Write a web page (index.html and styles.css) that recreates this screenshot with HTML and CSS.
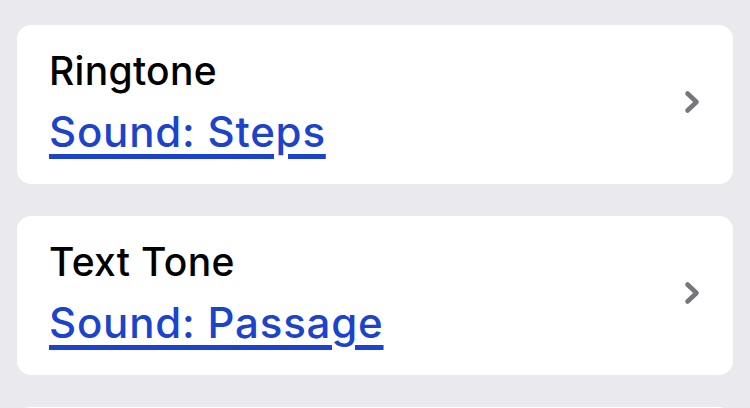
FILE: index.html
```html
<!DOCTYPE html>
<html>
<head>
<meta charset="utf-8">
<link rel="stylesheet" href="styles.css">
</head>
<body>
<div class="list">
  <div class="card">
    <div class="text">
      <div class="title">Ringtone</div>
      <a class="link" href="#">Sound: Steps</a>
    </div>
    <svg class="chev" width="16" height="24" viewBox="0 0 16 24"><path d="M3.5 3.5 L12.5 12 L3.5 20.5" fill="none" stroke="#76767b" stroke-width="4.6" stroke-linecap="round" stroke-linejoin="round"/></svg>
  </div>
  <div class="card">
    <div class="text">
      <div class="title">Text Tone</div>
      <a class="link" href="#">Sound: Passage</a>
    </div>
    <svg class="chev" width="16" height="24" viewBox="0 0 16 24"><path d="M3.5 3.5 L12.5 12 L3.5 20.5" fill="none" stroke="#76767b" stroke-width="4.6" stroke-linecap="round" stroke-linejoin="round"/></svg>
  </div>
  <div class="card"></div>
</div>
</body>
</html>
```
FILE: styles.css
```css
html, body {
  margin: 0;
  padding: 0;
  background: #e9e9ee;
  font-family: Inter, "Noto Sans", sans-serif;
  overflow: hidden;
  height: 408px;
}
.list {
  display: flex;
  flex-direction: column;
  gap: 32px;
  padding: 25px 17px 0;
}
.card {
  background: #ffffff;
  border-radius: 14px;
  height: 159px;
  flex-shrink: 0;
  box-sizing: border-box;
  padding: 23px 33px 29px 32px;
  display: flex;
  align-items: center;
  justify-content: space-between;
}
.text {
  display: flex;
  flex-direction: column;
  align-self: flex-start;
}
.title {
  font-size: 39px;
  line-height: 46px;
  font-weight: 500;
  letter-spacing: 0.3px;
  color: #000;
}
.link {
  margin-top: 15px;
  font-size: 42px;
  line-height: 46px;
  font-weight: 500;
  letter-spacing: 0.8px;
  color: #1b43cb;
  text-decoration: underline;
  text-decoration-thickness: 4.5px;
  text-underline-offset: 7px;
}
.chev {
  display: block;
}
```
